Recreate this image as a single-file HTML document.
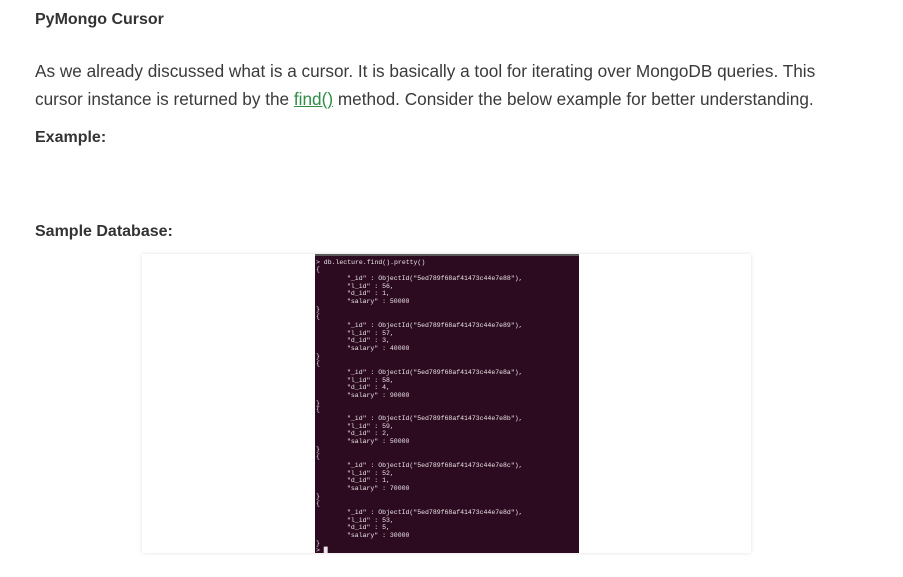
<!DOCTYPE html>
<html><head><meta charset="utf-8"><style>
body{margin:0;background:#fff;width:903px;height:577px;overflow:hidden;font-family:"Liberation Sans",sans-serif;color:#333;position:relative}
.h{position:absolute;left:35px;font-weight:bold;font-size:16px;color:#333}
.p{position:absolute;left:35px;top:57px;font-size:17.2px;line-height:28px;color:#3a3a3a;width:868px;white-space:nowrap}
a{color:#2f8d46;text-decoration:underline}
.card{position:absolute;left:142px;top:254px;width:609px;height:299px;background:#fff;box-shadow:0 0 4px rgba(0,0,0,.12)}
.term{position:absolute;left:315px;top:254px;width:264px;height:299px;background:#2c0b20;border-top:2px solid #5a5a5a;box-sizing:border-box;font-family:"Liberation Mono",monospace;font-size:6.5px;color:#ece4e8;overflow:hidden}
.l{position:absolute;white-space:pre;line-height:7px}
</style></head><body>
<div class="h" style="top:11px">PyMongo Cursor</div>
<div class="p">As we already discussed what is a cursor. It is basically a tool for iterating over MongoDB queries. This<br>cursor instance is returned by the <a>find()</a> method. Consider the below example for better understanding.</div>
<div class="h" style="top:129px">Example:</div>
<div class="h" style="top:223px">Sample Database:</div>
<div class="card"></div>
<div class="term" id="t"></div>
<script>
var t=document.getElementById('t');
function L(y,x,s){var d=document.createElement('div');d.className='l';d.style.top=(y-254-3)+'px';d.style.left=x+'px';d.textContent=s;t.appendChild(d);}
L(260,1,'> db.lecture.find().pretty()');
var ids=['88','89','8a','8b','8c','8d'],li=['56','57','58','59','52','53'],di=['1','3','4','2','1','5'],sa=['50000','40000','90000','50000','70000','30000'];
var ys=[276,323,370,416,463,510];
for(var i=0;i<6;i++){var y=ys[i];L(y-9,1,'{');
L(y,32,'"_id" : ObjectId("5ed789f68af41473c44e7e'+ids[i]+'"),');
L(y+7.7,32,'"l_id" : '+li[i]+',');
L(y+15.4,32,'"d_id" : '+di[i]+',');
L(y+23,32,'"salary" : '+sa[i]);
L(y+31,1,'}');}
L(548,1,'> \u2588');
</script>
</body></html>
